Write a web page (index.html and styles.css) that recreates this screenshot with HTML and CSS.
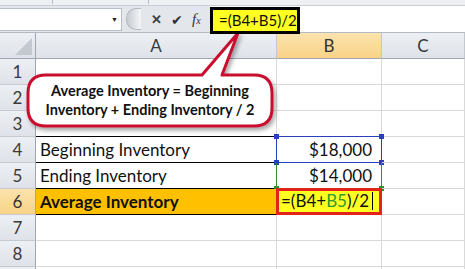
FILE: index.html
```html
<!DOCTYPE html>
<html lang="en">
<head>
  <meta charset="UTF-8" />
  <title>Average Inventory</title>
  <link rel="stylesheet" href="styles.css">
</head>
<body>
  <div class="app">
    <div class="top-strip">
      <span class="tick tick-a"></span>
      <span class="tick tick-b"></span>
    </div>

    <div class="formula-bar">
      <div class="name-box">
        <span class="drop">&#9660;</span>
      </div>
      <div class="knob"></div>
      <div class="fx-buttons">
        <span class="btn-x">&#10005;</span>
        <span class="btn-ok">&#10004;</span>
        <span class="btn-fx">f<sub>x</sub></span>
      </div>
      <div class="formula-input">
        <div class="formula-box">=(B4+B5)/2</div>
      </div>
    </div>

    <div class="sheet">
      <div class="hd corner"><span class="corner-tri"></span></div>
      <div class="hd col">A</div>
      <div class="hd col on">B</div>
      <div class="hd col">C</div>

      <div class="hd row">1</div><div class="cell"></div><div class="cell"></div><div class="cell"></div>
      <div class="hd row">2</div><div class="cell"></div><div class="cell"></div><div class="cell"></div>
      <div class="hd row">3</div><div class="cell line-b"></div><div class="cell"></div><div class="cell"></div>

      <div class="hd row">4</div>
      <div class="cell line-b">Beginning Inventory</div>
      <div class="cell num ref-blue">
        $18,000
        <span class="dot dot-tl"></span><span class="dot dot-tr"></span>
        <span class="dot dot-bl"></span><span class="dot dot-br"></span>
      </div>
      <div class="cell"></div>

      <div class="hd row">5</div>
      <div class="cell line-b">Ending Inventory</div>
      <div class="cell num ref-green">
        $14,000
        <span class="dot green dot-bl"></span><span class="dot green dot-br"></span>
      </div>
      <div class="cell"></div>

      <div class="hd row on">6</div>
      <div class="cell line-b total">Average Inventory</div>
      <div class="cell editing">=(B4+<span class="g">B5</span>)/2<span class="caret"></span></div>
      <div class="cell"></div>

      <div class="hd row">7</div><div class="cell"></div><div class="cell"></div><div class="cell"></div>
      <div class="hd row">8</div><div class="cell"></div><div class="cell"></div><div class="cell"></div>
      <div class="hd row"></div><div class="cell"></div><div class="cell"></div><div class="cell"></div>
    </div>

    <div class="callout">
      <svg class="callout-shape" width="465" height="269" viewBox="0 0 465 269">
        <defs>
          <filter id="shadow" x="-10%" y="-10%" width="130%" height="140%">
            <feDropShadow dx="2" dy="3" stdDeviation="2" flood-color="#000" flood-opacity="0.35"/>
          </filter>
        </defs>
        <path d="M46 75 H202 L238 33 L222 75 H254 Q272 75 272 93 V108 Q272 126 254 126 H46 Q28 126 28 108 V93 Q28 75 46 75 Z"
              fill="#fff" stroke="#c8102e" stroke-width="3" stroke-linejoin="round" filter="url(#shadow)"/>
      </svg>
      <div class="callout-text">
        Average Inventory = Beginning<br>
        Inventory + Ending Inventory / 2
      </div>
    </div>
  </div>
</body>
</html>
```

FILE: styles.css
```css
body {
  margin: 0;
  background: #fff;
  font-family: 'Lato', 'Open Sans', sans-serif;
  color: #111;
}

.app {
  position: relative;
  width: 465px;
  height: 269px;
  overflow: hidden;
}

/* ribbon edge + formula bar */

.top-strip {
  position: relative;
  height: 5px;
  background: #eef0f3;
  border-bottom: 1px solid #c9ced6;
}

.tick {
  position: absolute;
  top: 0;
  width: 1px;
  height: 4px;
  background: #b9bec6;
}

.tick-a { left: 52px; }
.tick-b { left: 148px; }

.formula-bar {
  display: flex;
  align-items: center;
  height: 26px;
  background: #e3e7ec;
  border-bottom: 1px solid #b4bac3;
}

.name-box {
  box-sizing: border-box;
  width: 122px;
  height: 23px;
  background: #fff;
  border: 1px solid #b7bdc6;
  border-left: none;
  display: flex;
  align-items: center;
  justify-content: flex-end;
  padding-right: 3px;
}

.drop {
  font-size: 7px;
  color: #222;
}

.knob {
  width: 14px;
  height: 20px;
  margin-left: 4px;
  border-radius: 10px 0 0 10px;
  background: linear-gradient(90deg, #c7ccd3, #f4f5f7);
  border: 1px solid #b4bac2;
  border-right: none;
}

.fx-buttons {
  display: flex;
  align-items: center;
  gap: 9px;
  margin-left: 10px;
  width: 59px;
}

.btn-x {
  font-size: 13px;
  font-weight: bold;
  color: #3b3f45;
}

.btn-ok {
  font-size: 14px;
  color: #2c3036;
}

.btn-fx {
  font-family: 'Liberation Serif', serif;
  font-style: italic;
  font-size: 15px;
  color: #333;
}

.btn-fx sub {
  font-size: 10px;
  vertical-align: baseline;
}

.formula-input {
  flex: 1;
  align-self: stretch;
  background: #fff;
  position: relative;
}

.formula-box {
  position: absolute;
  left: 0;
  top: 1px;
  box-sizing: border-box;
  width: 90px;
  height: 27px;
  background: #ffff22;
  border: 3px solid #000;
  font-size: 15px;
  line-height: 20px;
  padding-left: 6px;
  white-space: nowrap;
  z-index: 2;
}

/* grid */

.sheet {
  display: grid;
  grid-template-columns: 36px 241px 105px 83px;
  grid-template-rows: repeat(10, 26px);
}

.hd {
  box-sizing: border-box;
  background: linear-gradient(#eceff3, #dfe3e9);
  color: #3a3a3a;
  display: flex;
  align-items: center;
  justify-content: center;
  font-size: 17px;
}

.hd.col {
  border-right: 1px solid #c3c8cf;
  border-bottom: 1px solid #9fa6b0;
}

.hd.row {
  border-right: 1px solid #9fa6b0;
  border-bottom: 1px solid #c6cbd2;
}

.hd.on {
  background: linear-gradient(#fbe3ae, #f8d386);
  color: #333;
}

.corner {
  position: relative;
  border-right: 1px solid #9fa6b0;
  border-bottom: 1px solid #9fa6b0;
}

.corner-tri {
  position: absolute;
  right: 3px;
  bottom: 3px;
  width: 0;
  height: 0;
  border-left: 17px solid transparent;
  border-bottom: 17px solid #c4c9d0;
}

.cell {
  position: relative;
  box-sizing: border-box;
  border-right: 1px solid #d9d9d9;
  border-bottom: 1px solid #d9d9d9;
  font-size: 17px;
  line-height: 25px;
  padding: 0 4px;
  white-space: nowrap;
}

.cell.line-b {
  border-bottom-color: #000;
}

.cell.num {
  text-align: right;
  padding-right: 9px;
}

.cell.total {
  background: #ffc000;
  font-weight: bold;
}

.ref-blue {
  border: 1px solid #2a3fbf;
  margin: -1px 0 0 -1px;
}

.ref-green {
  border: 1px solid #2f8f2f;
  border-top: none;
  margin-left: -1px;
}

.dot {
  position: absolute;
  width: 5px;
  height: 5px;
  background: #2a3fbf;
}

.dot.green { background: #2f8f2f; }

.dot-tl { left: -3px; top: -3px; }
.dot-tr { right: -3px; top: -3px; }
.dot-bl { left: -3px; bottom: -3px; }
.dot-br { right: -3px; bottom: -3px; }

.editing {
  background: #ffff22;
  border: 3px solid #e2231a;
  margin: -1px 0 0 -1px;
  line-height: 20px;
  padding-left: 2px;
}

.editing .g {
  color: #2f9a2f;
}

.caret {
  display: inline-block;
  width: 1px;
  height: 18px;
  margin-left: 3px;
  background: #000;
  vertical-align: -3px;
}

/* callout over the grid */

.callout {
  position: absolute;
  left: 0;
  top: 0;
  width: 465px;
  height: 269px;
  pointer-events: none;
}

.callout-shape {
  position: absolute;
  left: 0;
  top: 0;
}

.callout-text {
  position: absolute;
  left: 28px;
  top: 81px;
  width: 244px;
  text-align: center;
  font-weight: bold;
  font-size: 14.5px;
  line-height: 19px;
  color: #111;
}
```
